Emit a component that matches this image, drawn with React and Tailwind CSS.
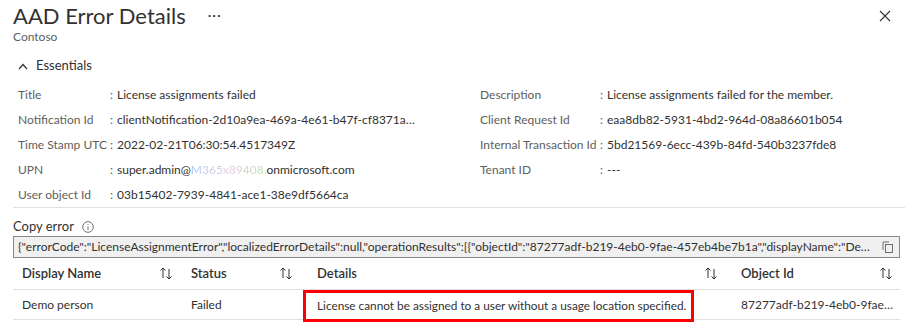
import React from 'react';

const leftRows = [
    { label: 'Title', value: 'License assignments failed' },
    { label: 'Notification Id', value: 'clientNotification-2d10a9ea-469a-4e61-b47f-cf8371a90b2f' },
    { label: 'Time Stamp UTC', value: '2022-02-21T06:30:54.4517349Z' },
    { label: 'UPN', value: 'upn' },
    { label: 'User object Id', value: '03b15402-7939-4841-ace1-38e9df5664ca' },
];

const rightRows = [
    { label: 'Description', value: 'License assignments failed for the member.' },
    { label: 'Client Request Id', value: 'eaa8db82-5931-4bd2-964d-08a86601b054' },
    { label: 'Internal Transaction Id', value: '5bd21569-6ecc-439b-84fd-540b3237fde8' },
    { label: 'Tenant ID', value: '---' },
];

const errorJson =
    '{"errorCode":"LicenseAssignmentError","localizedErrorDetails":null,"operationResults":[{"objectId":"87277adf-b219-4eb0-9fae-457eb4be7b1a","displayName":"Demo person","errorCode":"UsageLocationNotSpecified"}]}';

const SortIcon = () => (
    <svg width="14" height="13" viewBox="0 0 14 13" fill="none" stroke="#323130" strokeWidth="1">
        <path d="M4 11V1M1.5 3.5L4 1l2.5 2.5" />
        <path d="M10 2v10M7.5 9.5L10 12l2.5-2.5" />
    </svg>
);

const Row = ({ label, value, labelW }) => (
    <div className="flex items-center h-[25px] whitespace-nowrap">
        <span className={`${labelW} shrink-0 text-[#605e5c]`}>{label}</span>
        <span className="w-[7px] shrink-0 text-[#605e5c]">:</span>
        {value === 'upn' ? (
            <span className="truncate">
                super.admin@
                <span className="bg-gradient-to-r from-[#a8c8f0] via-[#e8c8e0] to-[#b8e0b0] bg-clip-text text-transparent">M365x89408.</span>
                onmicrosoft.com
            </span>
        ) : (
            <span className="truncate max-w-[302px]">{value}</span>
        )}
    </div>
);

export default function App() {
    return (
        <div className="w-[905px] h-[326px] bg-white overflow-hidden text-[#323130] font-['Segoe_UI',Lato,sans-serif] text-[12px]">
            {/* Header */}
            <div className="flex items-start pl-[13px] pr-[13px]">
                <div className="flex items-center h-[32px]">
                    <h1 className="text-[22px] font-normal leading-[32px]">AAD Error Details</h1>
                    <span className="ml-[22px] text-[14px] tracking-[1px] leading-none mt-[-2px]">···</span>
                </div>
                <button className="ml-auto mt-[10px] mr-[1px]">
                    <svg width="12" height="12" viewBox="0 0 12 12" stroke="#323130" strokeWidth="1.1">
                        <path d="M1 1l10 10M11 1L1 11" />
                    </svg>
                </button>
            </div>
            <div className="pl-[13px] text-[12px] leading-[14px] text-[#605e5c] mt-[-2px]">Contoso</div>

            {/* Essentials */}
            <div className="flex items-center gap-[8px] pl-[18px] h-[20px] mt-[12px] text-[13px]">
                <svg width="10" height="7" viewBox="0 0 10 7" fill="none" stroke="#323130" strokeWidth="1.2">
                    <path d="M1 6l4-4.5L9 6" />
                </svg>
                <span>Essentials</span>
            </div>

            <div className="grid grid-cols-[462px_1fr] mt-[6px]">
                <div className="pl-[18px]">
                    {leftRows.map((r) => (
                        <Row key={r.label} {...r} labelW="w-[92px]" />
                    ))}
                </div>
                <div className="pl-[18px]">
                    {rightRows.map((r) => (
                        <Row key={r.label} {...r} labelW="w-[120px]" />
                    ))}
                </div>
            </div>
            <div className="ml-[13px] border-t border-[#e1dfdd]" />

            {/* Copy error */}
            <div className="px-[13px]">
                <div className="flex items-center gap-[8px] h-[18px] mt-[10px] text-[13px]">
                    <span>Copy error</span>
                    <svg width="12" height="12" viewBox="0 0 12 12" fill="none" stroke="#605e5c" strokeWidth="0.9">
                        <circle cx="6" cy="6" r="5.3" />
                        <path d="M6 5.2v3.6" />
                        <circle cx="6" cy="3.5" r="0.5" fill="#605e5c" stroke="none" />
                    </svg>
                </div>
                <div className="flex items-center h-[22px] w-[887px] bg-[#f0f0f0] border border-[#8a8886] pl-[4px] pr-[6px]">
                    <span className="truncate flex-1">{errorJson}</span>
                    <svg className="ml-[8px] shrink-0" width="11" height="12" viewBox="0 0 11 12" fill="none" stroke="#605e5c" strokeWidth="0.9">
                        <rect x="3.5" y="3.5" width="7" height="8" />
                        <path d="M1 9V1h6" />
                    </svg>
                </div>

                {/* Table */}
                <div className="w-[887px]">
                    <div className="grid grid-cols-[169px_121px_429px_1fr] h-[32px] items-center border-b border-[#e1dfdd] font-semibold text-[13px]">
                        <div className="flex items-center pl-[9px] pr-[9px]"><span>Display Name</span><span className="ml-auto"><SortIcon /></span></div>
                        <div className="flex items-center pl-[9px] pr-[10px]"><span>Status</span><span className="ml-auto"><SortIcon /></span></div>
                        <div className="flex items-center pl-[14px] pr-[14px]"><span>Details</span><span className="ml-auto"><SortIcon /></span></div>
                        <div className="flex items-center pl-[9px] pr-[7px]"><span>Object Id</span><span className="ml-auto"><SortIcon /></span></div>
                    </div>
                    <div className="grid grid-cols-[169px_121px_429px_1fr] h-[30px] items-start border-b border-[#e1dfdd] text-[12px]">
                        <div className="pl-[9px] h-[30px] flex items-center">Demo person</div>
                        <div className="pl-[9px] h-[30px] flex items-center">Failed</div>
                        <div className="relative h-[30px]">
                            <span className="absolute left-0 top-0 h-[32px] w-[391px] border-[3px] border-[#ff0000] flex items-center pl-[11px] whitespace-nowrap text-[11.8px]">
                                License cannot be assigned to a user without a usage location specified.
                            </span>
                        </div>
                        <div className="pl-[9px] pr-[3px] h-[30px] flex items-center min-w-0">
                            <span className="truncate">87277adf-b219-4eb0-9fae-457eb4be7b1a</span>
                        </div>
                    </div>
                </div>
            </div>
        </div>
    );
}
